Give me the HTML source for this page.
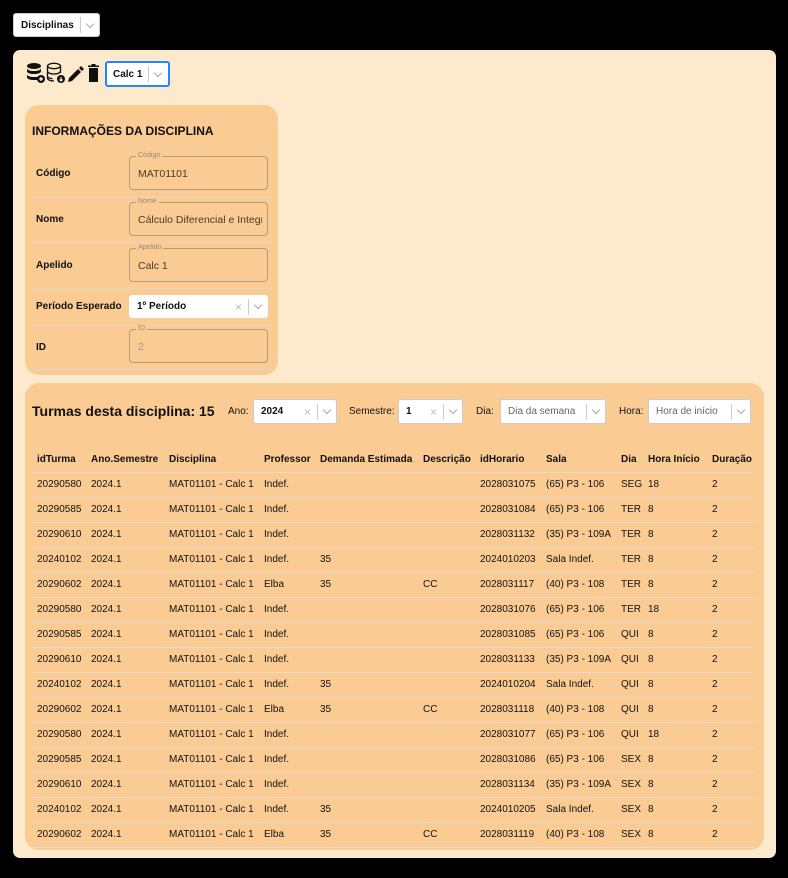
<!DOCTYPE html><html><head><style>
*{box-sizing:border-box;margin:0;padding:0}
body{width:788px;height:878px;background:#000;font-family:"Liberation Sans",sans-serif;position:relative;overflow:hidden;color:#111}
.abs{position:absolute}
.sel{position:absolute;background:#fff;border:1px solid #ccc;border-radius:3px;font-size:11px;display:flex;align-items:center}
.sep{width:1px;height:16px;background:#ccc;margin:0 6px}
.chev{width:6px;height:6px;border-right:1.3px solid #aaa;border-bottom:1.3px solid #aaa;transform:rotate(45deg);margin-top:-3px}
.x{color:#bbb;font-size:12px}
.panel{left:13px;top:50px;width:763px;height:808px;background:#fde9cb;border-radius:7px}
.card{background:#facb93;border-radius:14px}
.lbl{position:absolute;left:36px;font-size:10px;font-weight:bold}
.hr{position:absolute;left:32px;width:240px;height:1px;background:#e4d6c4}
.fs{position:absolute;left:129px;width:139px;height:34px;border:1px solid #b89a78;border-radius:4px;font-size:10.5px;color:#4a3a2a}
.fs .t{position:absolute;left:8px;top:11px;width:124px;white-space:nowrap;overflow:hidden}
.fs span{position:absolute;top:-6px;left:6px;font-size:7px;line-height:10px;color:#9a8a7a;background:#facb93;padding:0 2px}
table{position:absolute;left:32px;top:447px;border-collapse:collapse;font-size:10px}
td,th{height:25px;padding:0 0 0 5px;text-align:left;white-space:nowrap;border-bottom:1px solid #e9dccc}
th{font-weight:bold;font-size:10px}
</style></head><body>
<div class="sel" style="left:13px;top:13px;width:87px;height:24px;padding-left:7px"><b style="font-size:10px">Disciplinas</b><div class="sep"></div><div class="chev"></div></div>
<div class="abs panel"></div>
<svg class="abs" style="left:26px;top:62px" width="76" height="22" viewBox="0 0 76 22">
<g fill="#111"><ellipse cx="8" cy="4" rx="7" ry="3"/><path d="M1 6c0 2 3 3 7 3s7-1 7-3v3c0 2-3 3-7 3s-7-1-7-3z"/><path d="M1 12c0 2 3 3 7 3s3 0 4 0v3c-1 0-2 0-4 0-4 0-7-1-7-3z"/><circle cx="15" cy="17" r="4"/></g>
<path d="M13 17h4M15 15v4" stroke="#fff" stroke-width="1.3"/>
<g fill="none" stroke="#111" stroke-width="1.3"><ellipse cx="28" cy="4" rx="6.5" ry="2.7"/><path d="M21.5 4v12c0 2 3 3 6.5 3M34.5 4v7M21.5 9c0 2 3 3 6.5 3s6.5-1 6.5-3M21.5 14c0 2 3 2.5 5 2.7"/></g>
<circle cx="35" cy="17" r="4" fill="#111"/><path d="M35 15v4M33.5 17.5l1.5 1.5 1.5-1.5" stroke="#fff" stroke-width="1.1" fill="none"/>
<path d="M42 20l1-4 9-9 3 3-9 9z M53 6l2-2 3 3-2 2z" fill="#111"/>
<path d="M63 6h9v14h-9z M62 3.5h11v1.5h-11z M65.5 2h4v1.5h-4z" fill="#111"/>
</svg>
<div class="sel" style="left:105px;top:61px;width:65px;height:26px;border:2px solid #2684ff;padding-left:6px"><b style="font-size:10px">Calc 1</b><div class="sep" style="margin:0 6px"></div><div class="chev"></div></div>
<div class="abs card" style="left:25px;top:105px;width:253px;height:270px"></div>
<div class="abs" style="left:32px;top:124px;font-size:12px;font-weight:bold">INFORMAÇÕES DA DISCIPLINA</div>
<div class="lbl" style="top:168px">Código</div><div class="fs" style="top:156px"><span>Código</span><div class="t">MAT01101</div></div><div class="hr" style="top:196px"></div>
<div class="lbl" style="top:214px">Nome</div><div class="fs" style="top:202px"><span>Nome</span><div class="t">Cálculo Diferencial e Integral</div></div><div class="hr" style="top:242px"></div>
<div class="lbl" style="top:260px">Apelido</div><div class="fs" style="top:248px"><span>Apelido</span><div class="t">Calc 1</div></div><div class="hr" style="top:288px"></div>
<div class="lbl" style="top:301px">Período Esperado</div>
<div class="sel" style="left:129px;top:295px;width:139px;height:23px;padding-left:7px;border-color:#fff"><b style="font-size:10px;flex:1">1º Período</b><span class="x">×</span><div class="sep"></div><div class="chev" style="margin-right:6px"></div></div>
<div class="hr" style="top:324px"></div>
<div class="lbl" style="top:342px">ID</div><div class="fs" style="top:329px;color:#999"><span>ID</span><div class="t">2</div></div><div class="hr" style="top:369px"></div>
<div class="abs card" style="left:25px;top:383px;width:739px;height:467px"></div>
<div class="abs" style="left:32px;top:403px;font-size:14px;font-weight:bold">Turmas desta disciplina: 15</div>
<div class="abs" style="left:228px;top:406px;font-size:10px">Ano:</div>
<div class="sel" style="left:253px;top:399px;width:84px;height:25px;padding-left:7px"><b style="font-size:10px;flex:1">2024</b><span class="x">×</span><div class="sep"></div><div class="chev" style="margin-right:6px"></div></div>
<div class="abs" style="left:349px;top:406px;font-size:10px">Semestre:</div>
<div class="sel" style="left:398px;top:399px;width:65px;height:25px;padding-left:7px"><b style="font-size:10px;flex:1">1</b><span class="x">×</span><div class="sep"></div><div class="chev" style="margin-right:6px"></div></div>
<div class="abs" style="left:476px;top:406px;font-size:10px">Dia:</div>
<div class="sel" style="left:500px;top:399px;width:106px;height:25px;padding-left:7px;color:#666"><span style="font-size:10px;flex:1">Dia da semana</span><div class="sep"></div><div class="chev" style="margin-right:6px"></div></div>
<div class="abs" style="left:619px;top:406px;font-size:10px">Hora:</div>
<div class="sel" style="left:648px;top:399px;width:103px;height:25px;padding-left:7px;color:#666"><span style="font-size:10px;flex:1">Hora de início</span><div class="sep"></div><div class="chev" style="margin-right:6px"></div></div>
<table>
<tr><th style="width:54px">idTurma</th><th style="width:78px">Ano.Semestre</th><th style="width:95px">Disciplina</th><th style="width:56px">Professor</th><th style="width:103px">Demanda Estimada</th><th style="width:57px">Descrição</th><th style="width:66px">idHorario</th><th style="width:75px">Sala</th><th style="width:27px">Dia</th><th style="width:64px">Hora Início</th><th style="width:48px">Duração</th></tr>
<tr><td>20290580</td><td>2024.1</td><td>MAT01101 - Calc 1</td><td>Indef.</td><td></td><td></td><td>2028031075</td><td>(65) P3 - 106</td><td>SEG</td><td>18</td><td>2</td></tr>
<tr><td>20290585</td><td>2024.1</td><td>MAT01101 - Calc 1</td><td>Indef.</td><td></td><td></td><td>2028031084</td><td>(65) P3 - 106</td><td>TER</td><td>8</td><td>2</td></tr>
<tr><td>20290610</td><td>2024.1</td><td>MAT01101 - Calc 1</td><td>Indef.</td><td></td><td></td><td>2028031132</td><td>(35) P3 - 109A</td><td>TER</td><td>8</td><td>2</td></tr>
<tr><td>20240102</td><td>2024.1</td><td>MAT01101 - Calc 1</td><td>Indef.</td><td>35</td><td></td><td>2024010203</td><td>Sala Indef.</td><td>TER</td><td>8</td><td>2</td></tr>
<tr><td>20290602</td><td>2024.1</td><td>MAT01101 - Calc 1</td><td>Elba</td><td>35</td><td>CC</td><td>2028031117</td><td>(40) P3 - 108</td><td>TER</td><td>8</td><td>2</td></tr>
<tr><td>20290580</td><td>2024.1</td><td>MAT01101 - Calc 1</td><td>Indef.</td><td></td><td></td><td>2028031076</td><td>(65) P3 - 106</td><td>TER</td><td>18</td><td>2</td></tr>
<tr><td>20290585</td><td>2024.1</td><td>MAT01101 - Calc 1</td><td>Indef.</td><td></td><td></td><td>2028031085</td><td>(65) P3 - 106</td><td>QUI</td><td>8</td><td>2</td></tr>
<tr><td>20290610</td><td>2024.1</td><td>MAT01101 - Calc 1</td><td>Indef.</td><td></td><td></td><td>2028031133</td><td>(35) P3 - 109A</td><td>QUI</td><td>8</td><td>2</td></tr>
<tr><td>20240102</td><td>2024.1</td><td>MAT01101 - Calc 1</td><td>Indef.</td><td>35</td><td></td><td>2024010204</td><td>Sala Indef.</td><td>QUI</td><td>8</td><td>2</td></tr>
<tr><td>20290602</td><td>2024.1</td><td>MAT01101 - Calc 1</td><td>Elba</td><td>35</td><td>CC</td><td>2028031118</td><td>(40) P3 - 108</td><td>QUI</td><td>8</td><td>2</td></tr>
<tr><td>20290580</td><td>2024.1</td><td>MAT01101 - Calc 1</td><td>Indef.</td><td></td><td></td><td>2028031077</td><td>(65) P3 - 106</td><td>QUI</td><td>18</td><td>2</td></tr>
<tr><td>20290585</td><td>2024.1</td><td>MAT01101 - Calc 1</td><td>Indef.</td><td></td><td></td><td>2028031086</td><td>(65) P3 - 106</td><td>SEX</td><td>8</td><td>2</td></tr>
<tr><td>20290610</td><td>2024.1</td><td>MAT01101 - Calc 1</td><td>Indef.</td><td></td><td></td><td>2028031134</td><td>(35) P3 - 109A</td><td>SEX</td><td>8</td><td>2</td></tr>
<tr><td>20240102</td><td>2024.1</td><td>MAT01101 - Calc 1</td><td>Indef.</td><td>35</td><td></td><td>2024010205</td><td>Sala Indef.</td><td>SEX</td><td>8</td><td>2</td></tr>
<tr><td>20290602</td><td>2024.1</td><td>MAT01101 - Calc 1</td><td>Elba</td><td>35</td><td>CC</td><td>2028031119</td><td>(40) P3 - 108</td><td>SEX</td><td>8</td><td>2</td></tr>
</table>
</body></html>
